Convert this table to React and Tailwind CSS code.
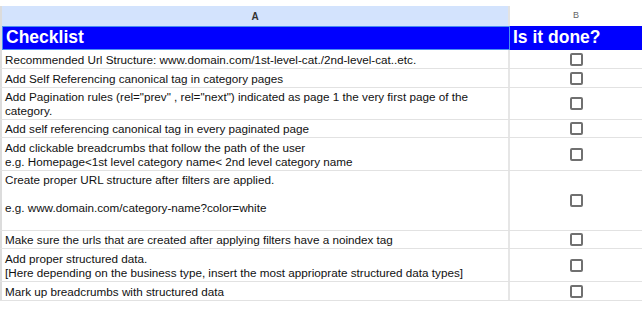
const rows = [
  { h: 'h-[19px]', lines: ['Recommended Url Structure: www.domain.com/1st-level-cat./2nd-level-cat..etc.'] },
  { h: 'h-[19px]', lines: ['Add Self Referencing canonical tag in category pages'] },
  {
    h: 'h-[32px]',
    lines: ['Add Pagination rules (rel="prev" , rel="next") indicated as page 1 the very first page of the', 'category.'],
  },
  { h: 'h-[18px]', lines: ['Add self referencing canonical tag in every paginated page'] },
  {
    h: 'h-[33px]',
    lines: ['Add clickable breadcrumbs that follow the path of the user', 'e.g. Homepage<1st level category name< 2nd level category name'],
  },
  {
    h: 'h-[60px]',
    lines: ['Create proper URL structure after filters are applied.', '', 'e.g. www.domain.com/category-name?color=white', ''],
  },
  { h: 'h-[18px]', lines: ['Make sure the urls that are created after applying filters have a noindex tag'] },
  {
    h: 'h-[33px]',
    lines: ['Add proper structured data.', '[Here depending on the business type, insert the most apprioprate structured data types]'],
  },
  { h: 'h-[19px]', lines: ['Mark up breadcrumbs with structured data'] },
]

function Checkbox() {
  return <div className="w-[13px] h-[13px] rounded-[2px] border-2 border-[#707070] bg-white" />
}

export default function App() {
  return (
    <div className="w-[642px] h-[309px] bg-white overflow-hidden font-['Liberation_Sans',Arial,sans-serif] text-[#111]">
      <div className="h-[6px]" />

      {/* column headers */}
      <div className="flex h-[20px]">
        <div className="w-[2px] bg-[#dcdcdc]" />
        <div className="w-[508px] bg-[#d3e3fd] border-r-2 border-[#e3e3e3] flex items-center justify-center text-[10px] font-bold text-[#333]">
          A
        </div>
        <div className="flex-1 bg-white flex items-center justify-center text-[9px] text-[#666]">B</div>
      </div>

      {/* title row */}
      <div className="flex h-[24px]">
        <div className="w-[2px] bg-[#dcdcdc]" />
        <div className="w-[508px] bg-[#0000ff] border border-[#4a8ff0] flex items-center pl-[3px] text-[17.5px] font-bold text-white leading-none">
          Checklist
        </div>
        <div className="flex-1 bg-[#0000ff] flex items-center pl-[3px] text-[17.5px] font-bold text-white leading-none">
          Is it done?
        </div>
      </div>

      {rows.map((r, i) => (
        <div key={i} className={`flex ${r.h} border-b border-[#e2e2e2]`}>
          <div className="w-[2px] bg-[#dcdcdc]" />
          <div className="w-[508px] border-r-2 border-[#e6e6e6] flex flex-col justify-end pl-[3px] pb-[1px] text-[11.7px] leading-[14px] whitespace-nowrap">
            {r.lines.map((l, j) => (
              <div key={j} className="h-[14px]">{l}</div>
            ))}
          </div>
          <div className="flex-1 flex items-center justify-center">
            <Checkbox />
          </div>
        </div>
      ))}
    </div>
  )
}
